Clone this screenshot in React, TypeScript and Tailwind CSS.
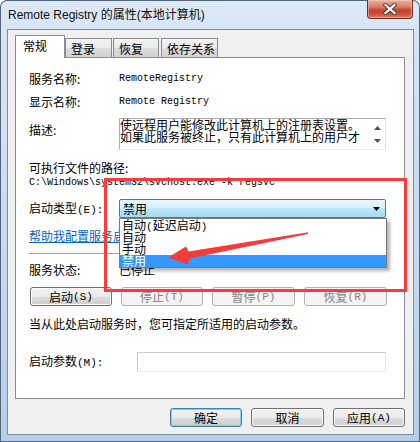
import React from "react";

function Mono({ children }: { children: React.ReactNode }) {
  return <span className="font-['Liberation_Mono',monospace] text-[11px]">{children}</span>;
}

function Btn({
  children,
  kind,
  className,
}: {
  children: React.ReactNode;
  kind: "normal" | "disabled" | "default";
  className: string;
}) {
  const base =
    "h-[19px] rounded-[3px] border flex items-center justify-center leading-[14px] text-[12px] whitespace-nowrap";
  const style =
    kind === "disabled"
      ? "border-[#adb2b5] bg-[#f4f4f4] text-[#838383]"
      : kind === "default"
      ? "border-[#3c7fb1] text-black bg-[linear-gradient(to_bottom,#f2f2f2_0%,#ebebeb_50%,#dddddd_50%,#cfcfcf_100%)] shadow-[inset_0_0_0_1px_#6fd2f8]"
      : "border-[#707070] text-black bg-[linear-gradient(to_bottom,#f2f2f2_0%,#ebebeb_50%,#dddddd_50%,#cfcfcf_100%)] shadow-[inset_0_0_0_1px_#fbfbfb]";
  return <div className={base + " " + style + " " + className}>{children}</div>;
}

export default function App() {
  return (
    <div className="relative w-[420px] h-[442px] overflow-hidden rounded-t-[7px] bg-[linear-gradient(to_bottom,#dde8f5_0%,#d4e3f3_12%,#c6daef_60%,#b5cee9_100%)] shadow-[inset_0_0_0_1px_#52647a] text-black font-['Noto_Sans_CJK_SC',sans-serif] text-[12px]">
      {/* Title bar */}
      <div className="flex h-[29px] justify-between">
        <div className="pl-[8px] pt-[7px] leading-[16px] text-[12px] text-[#111] font-['Liberation_Sans','Noto_Sans_CJK_SC',sans-serif] whitespace-nowrap">
          Remote Registry 的属性(本地计算机)
        </div>
        <div className="mr-[7px] h-[19px] w-[46px] rounded-b-[4px] border border-t-0 border-[#6e2b20] bg-[linear-gradient(to_bottom,#eab0a2_0%,#d97a67_40%,#c4442f_55%,#c94a35_75%,#d97c66_100%)] shadow-[inset_0_0_0_1px_rgba(255,220,210,0.45)] flex items-center justify-center">
          <svg width="14" height="12" viewBox="0 0 14 12">
            <path d="M2.5 2 L11.5 10 M11.5 2 L2.5 10" stroke="#4a3a3a" strokeWidth="4" strokeLinecap="square" />
            <path d="M2.5 2 L11.5 10 M11.5 2 L2.5 10" stroke="#ffffff" strokeWidth="2.2" strokeLinecap="square" />
          </svg>
        </div>
      </div>

      {/* Window body */}
      <div className="ml-[7px] w-[407px] h-[406px] border border-[#7b8da3] bg-[#f0f0f0] pt-[5px] pl-[7px] pr-[8px]">
        {/* Tabs */}
        <div className="relative z-10 flex h-[22px] items-end">
          <div className="w-[50px] h-[23px] -mb-[1px] bg-white border border-b-0 border-[#898c95] pl-[7px] pt-[3px] leading-[14px]">
            常规
          </div>
          <div className="w-[47px] h-[19px] border border-b-0 border-[#898c95] bg-[linear-gradient(to_bottom,#f3f3f3_0%,#ebebeb_50%,#dedede_50%,#d2d2d2_100%)] pl-[5px] pt-[3px] leading-[14px]">
            登录
          </div>
          <div className="ml-[1px] w-[46px] h-[19px] border border-b-0 border-[#898c95] bg-[linear-gradient(to_bottom,#f3f3f3_0%,#ebebeb_50%,#dedede_50%,#d2d2d2_100%)] pl-[5px] pt-[3px] leading-[14px]">
            恢复
          </div>
          <div className="ml-[2px] w-[57px] h-[19px] border border-b-0 border-[#898c95] bg-[linear-gradient(to_bottom,#f3f3f3_0%,#ebebeb_50%,#dedede_50%,#d2d2d2_100%)] pl-[5px] pt-[3px] leading-[14px]">
            依存关系
          </div>
        </div>

        {/* Panel */}
        <div className="h-[342px] bg-white border border-[#898c95] pl-[13px] pt-[9px] flex flex-col leading-[14px]">
          <div className="flex h-[23px] items-center">
            <div className="w-[90px]">服务名称:</div>
            <div className="font-['Liberation_Mono',monospace] text-[10px]">RemoteRegistry</div>
          </div>
          <div className="flex h-[23px] items-center">
            <div className="w-[90px]">显示名称:</div>
            <div className="font-['Liberation_Mono',monospace] text-[10px] whitespace-pre">Remote Registry</div>
          </div>
          <div className="mt-[5px] flex h-[32px] items-start">
            <div className="w-[90px] mt-[5px]">描述:</div>
            <div className="flex w-[267px] h-[32px] border border-[#abadb3] border-r-[#dbdfe6] border-b-[#e3e9ef] bg-white">
              <div className="flex-1 overflow-hidden leading-[12px] whitespace-nowrap">
                <div>使远程用户能修改此计算机上的注册表设置。</div>
                <div>如果此服务被终止，只有此计算机上的用户才</div>
              </div>
              <div className="w-[16px] flex flex-col items-center justify-between pt-[7px] pb-[6px]">
                <svg width="7" height="4" viewBox="0 0 7 4">
                  <path d="M0 4 L3.5 0 L7 4 Z" fill="#505050" />
                </svg>
                <svg width="7" height="4" viewBox="0 0 7 4">
                  <path d="M0 0 L7 0 L3.5 4 Z" fill="#505050" />
                </svg>
              </div>
            </div>
          </div>
          <div className="mt-[11px] h-[14px]">可执行文件的路径:</div>
          <div className="mt-[1px] h-[14px] flex items-center font-['Liberation_Mono',monospace] text-[10px] whitespace-pre">
            C:\Windows\system32\svchost.exe -k regsvc
          </div>
          <div className="mt-[9px] flex h-[19px] items-center">
            <div className="w-[90px] whitespace-nowrap">
              启动类型<Mono>(E):</Mono>
            </div>
            <div className="w-[267px] h-[19px] rounded-[2px] border border-[#3c7fb1] bg-[linear-gradient(to_bottom,#eaf6fd_0%,#d9f0fc_45%,#bee6fd_50%,#a7d9f5_100%)] flex items-center justify-between pl-[3px] pr-[5px]">
              <span>禁用</span>
              <svg width="7" height="4" viewBox="0 0 7 4">
                <path d="M0 0 L7 0 L3.5 4 Z" fill="#000" />
              </svg>
            </div>
          </div>
          <div className="mt-[11px] h-[14px] text-[#0066cc] underline whitespace-nowrap">帮助我配置服务启动选项。</div>
          <div className="mt-[10px] w-[357px] h-[2px] border-t border-[#a0a0a0] border-b border-b-white" />
          <div className="mt-[8px] flex h-[14px] items-center">
            <div className="w-[90px]">服务状态:</div>
            <div>已停止</div>
          </div>
          <div className="mt-[10px] ml-[1px] flex gap-[9px]">
            <Btn kind="normal" className="w-[82px]">
              启动<Mono>(S)</Mono>
            </Btn>
            <Btn kind="disabled" className="w-[82px]">
              停止<Mono>(T)</Mono>
            </Btn>
            <Btn kind="disabled" className="w-[83px]">
              暂停<Mono>(P)</Mono>
            </Btn>
            <Btn kind="disabled" className="w-[83px]">
              恢复<Mono>(R)</Mono>
            </Btn>
          </div>
          <div className="mt-[11px] h-[14px] whitespace-nowrap">当从此处启动服务时，您可指定所适用的启动参数。</div>
          <div className="mt-[21px] flex h-[20px] items-center">
            <div className="w-[108px] whitespace-nowrap">
              启动参数<Mono>(M):</Mono>
            </div>
            <div className="w-[249px] h-[20px] border border-[#c9ccd2] border-r-[#e3e5e9] border-b-[#e3e9ef] bg-white" />
          </div>
        </div>

        {/* Bottom buttons */}
        <div className="mt-[9px] flex justify-end gap-[9px]">
          <Btn kind="default" className="w-[72px]">确定</Btn>
          <Btn kind="normal" className="w-[73px]">取消</Btn>
          <Btn kind="normal" className="w-[72px]">
            应用<Mono>(A)</Mono>
          </Btn>
        </div>
      </div>

      {/* Open dropdown list (overlay) */}
      <div className="absolute left-[119px] top-[218px] w-[268px] h-[50px] border border-[#7a7a7a] bg-white shadow-[3px_3px_3px_rgba(0,0,0,0.3)] leading-[12px] text-[12px] whitespace-nowrap">
        <div className="h-[12px] pl-[2px]">
          自动<Mono>(</Mono>延迟启动<Mono>)</Mono>
        </div>
        <div className="h-[12px] pl-[2px]">自动</div>
        <div className="h-[12px] pl-[2px]">手动</div>
        <div className="h-[12px] pl-[2px] bg-[#3399ff] text-white">禁用</div>
      </div>

      {/* Red annotation rectangle */}
      <div className="absolute left-[104px] top-[178px] w-[303px] h-[114px] border-[3px] border-[#fb3b3b] pointer-events-none" />

      {/* Red annotation arrow */}
      <svg className="absolute left-0 top-0 pointer-events-none" width="420" height="442" viewBox="0 0 420 442">
        <polygon
          points="168,257.5 186,246.5 188.5,251.5 308,232.3 308,234 189.5,258.5 188,264.5"
          fill="#f83a3a"
        />
      </svg>
    </div>
  );
}
